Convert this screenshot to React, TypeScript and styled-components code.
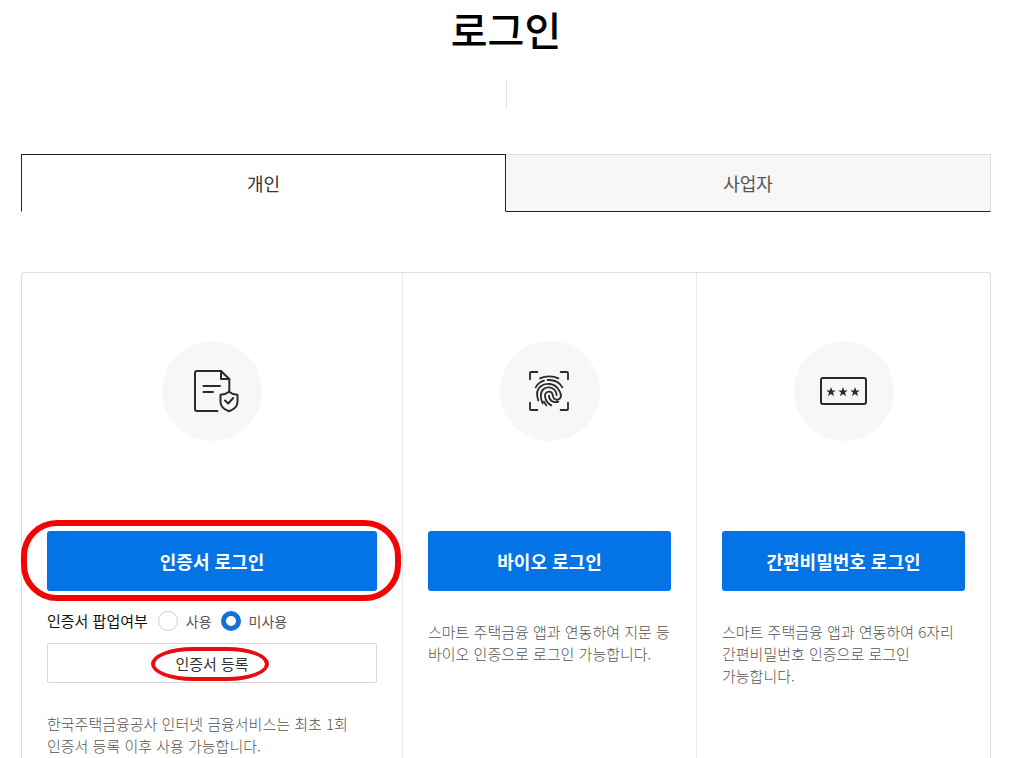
import React, { useState } from "react";
import styled, { createGlobalStyle } from "styled-components";

const GlobalStyle = createGlobalStyle`
  *, *::before, *::after { box-sizing: border-box; }
  body {
    margin: 0;
    background: #fff;
    color: #111;
    font-family: "Noto Sans CJK KR", "Noto Sans", sans-serif;
  }
  button { font-family: inherit; cursor: pointer; }
`;

const Page = styled.main`
  display: flex;
  flex-direction: column;
  min-height: 100vh;
  padding: 0 19px 0 21px;
`;

const Title = styled.h1`
  margin: 0;
  font-size: 40px;
  font-weight: 500;
  line-height: 58px;
  text-align: center;
  color: #000;
`;

const Divider = styled.div`
  width: 1px;
  height: 30px;
  margin: 22px auto 44px;
  background: #e2e2e2;
`;

const Tabs = styled.div`
  display: grid;
  grid-template-columns: 1fr 1fr;
  margin-bottom: 60px;
`;

const Tab = styled.button<{ $active: boolean }>`
  height: 58px;
  padding: 0;
  font-size: 18px;
  border: 1px solid ${(p) => (p.$active ? "#222" : "#ddd")};
  border-left-width: ${(p) => (p.$active ? 1 : 0)}px;
  border-bottom: 1px solid ${(p) => (p.$active ? "#fff" : "#222")};
  background: ${(p) => (p.$active ? "#fff" : "#f7f7f7")};
  color: ${(p) => (p.$active ? "#333" : "#555")};
`;

const Methods = styled.div`
  flex: 1;
  display: grid;
  grid-template-columns: 381fr 294fr 293fr;
  border: 1px solid #ddd;
  border-bottom: 0;
  border-radius: 3px 3px 0 0;
`;

const Method = styled.section`
  display: flex;
  flex-direction: column;
  padding: 68px 25px 0;
  &:not(:last-child) { border-right: 1px solid #e8e8e8; }
`;

const IconCircle = styled.div`
  align-self: center;
  width: 100px;
  height: 100px;
  margin-bottom: 90px;
  border-radius: 50%;
  background: #f7f7f7;
  svg { display: block; }
`;

const Marked = styled.div`
  position: relative;
  display: flex;
  flex-direction: column;
`;

const LoginButton = styled.button`
  height: 60px;
  padding: 0;
  border: 0;
  border-radius: 3px;
  background: #0473e6;
  color: #fff;
  font-size: 18px;
  font-weight: 700;
`;

const OutlineButton = styled.button`
  height: 40px;
  padding: 0;
  border: 1px solid #d8d8d8;
  border-radius: 2px;
  background: #fff;
  color: #333;
  font-size: 15px;
`;

const LoginMark = styled.span`
  position: absolute;
  inset: -11px -24px -10px -26px;
  border: 6px solid #f10505;
  border-radius: 36px;
  pointer-events: none;
`;

const RegisterMark = styled.span`
  position: absolute;
  top: 4px;
  left: 50%;
  width: 118px;
  height: 34px;
  transform: translateX(-50%);
  border: 4px solid #e60d12;
  border-radius: 42px / 17px;
  margin-left: -2px;
  pointer-events: none;
`;

const PopupChoice = styled.fieldset`
  display: flex;
  align-items: center;
  height: 20px;
  margin: 20px 0 12px;
  padding: 0;
  border: 0;
`;

const ChoiceTitle = styled.span`
  margin-right: 10px;
  font-size: 15px;
  line-height: 20px;
  color: #111;
`;

const Choice = styled.label`
  display: flex;
  align-items: center;
  gap: 8px;
  margin-right: 9px;
  font-size: 14px;
  line-height: 20px;
  color: #555;
`;

const Radio = styled.input`
  appearance: none;
  width: 20px;
  height: 20px;
  margin: 0;
  border: 1px solid #ccc;
  border-radius: 50%;
  background: #fff;
  &:checked { border: 5px solid #1272d4; }
`;

const Description = styled.p`
  margin: 30px 0 0;
  font-size: 15px;
  font-weight: 300;
  line-height: 22px;
  color: #555;
  word-break: keep-all;
`;

const strokeProps = {
  width: 100,
  height: 100,
  viewBox: "0 0 100 100",
  fill: "none",
  stroke: "#2b2b2b",
  strokeWidth: 2,
  strokeLinecap: "round" as const,
  strokeLinejoin: "round" as const,
  "aria-hidden": true,
};

const CertificateIcon = () => (
  <svg {...strokeProps}>
    <path d="M55.5 70H35a2 2 0 0 1-2-2V32a2 2 0 0 1 2-2h24l8.300 8V50" />
    <path d="M59 30v8h8.300" />
    <path d="M41.500 45H58M41.500 51H51" />
    <path d="M67 50.700c-2.400 2-5.300 2.900-8.500 3.100V61c0 4.500 3.800 7.500 8.500 9.300 4.700-1.800 8.500-4.800 8.500-9.300v-7.200c-3.200-.2-6.100-1.100-8.500-3.100z" />
    <path d="M63 59.500l3.200 3 5-5.500" />
  </svg>
);

const FingerprintIcon = () => (
  <svg {...strokeProps}>
    <g transform="translate(24 25) scale(.3333)" strokeWidth="5.500">
      <path d="M40 18H21a3 3 0 0 0-3 3v19M110 18h19a3 3 0 0 1 3 3v19M18 110v19a3 3 0 0 0 3 3h19M132 110v19a3 3 0 0 1-3 3h-19" />
      <path d="M48 37C63 29 88 29 103 37" />
      <path d="M35 64C41 53 50 47 60 44M71 42C90 41 107 49 115 64" />
      <path d="M43 103C36 84 40 69 50 61C66 48 92 53 102 68C109 78 113 91 108 97C101 104 89 102 87 91C86 82 82 77 75 77C67 77 62 83 63 91C65 105 72 113 82 118" />
      <path d="M67 118C64 114 62 111 60 107M56 112C48 96 48 78 59 69C69 61 85 63 92 72C96 77 98 82 98 87" />
      <path d="M75 89C75 103 87 112 103 107" />
    </g>
  </svg>
);

const star = "M0-5 1.300-1.600 4.800-1.600 2 .6 3 4.200 0 2.100-3 4.200-2 .6-4.800-1.600-1.300-1.600z";

const PasswordIcon = () => (
  <svg {...strokeProps}>
    <rect x="27" y="37" width="45" height="26" rx="2" />
    {[37, 49, 61].map((x) => (
      <path key={x} d={star} transform={`translate(${x} 51)`} fill="#2b2b2b" stroke="none" />
    ))}
  </svg>
);

export default function App() {
  const [tab, setTab] = useState(0);
  const [popup, setPopup] = useState("off");

  return (
    <>
      <GlobalStyle />
      <Page lang="ko">
        <Title>로그인</Title>
        <Divider />
        <Tabs role="tablist">
          {["개인", "사업자"].map((name, i) => (
            <Tab key={name} role="tab" aria-selected={tab === i} $active={tab === i} onClick={() => setTab(i)}>
              {name}
            </Tab>
          ))}
        </Tabs>
        <Methods>
          <Method>
            <IconCircle><CertificateIcon /></IconCircle>
            <Marked>
              <LoginButton>인증서 로그인</LoginButton>
              <LoginMark />
            </Marked>
            <PopupChoice aria-labelledby="popup-title">
              <ChoiceTitle id="popup-title">인증서 팝업여부</ChoiceTitle>
              <Choice>
                <Radio type="radio" name="popup" checked={popup === "on"} onChange={() => setPopup("on")} />
                사용
              </Choice>
              <Choice>
                <Radio type="radio" name="popup" checked={popup === "off"} onChange={() => setPopup("off")} />
                미사용
              </Choice>
            </PopupChoice>
            <Marked>
              <OutlineButton>인증서 등록</OutlineButton>
              <RegisterMark />
            </Marked>
            <Description>한국주택금융공사 인터넷 금융서비스는 최초 1회 인증서 등록 이후 사용 가능합니다.</Description>
          </Method>
          <Method>
            <IconCircle><FingerprintIcon /></IconCircle>
            <LoginButton>바이오 로그인</LoginButton>
            <Description>스마트 주택금융 앱과 연동하여 지문 등 바이오 인증으로 로그인 가능합니다.</Description>
          </Method>
          <Method>
            <IconCircle><PasswordIcon /></IconCircle>
            <LoginButton>간편비밀번호 로그인</LoginButton>
            <Description>스마트 주택금융 앱과 연동하여 6자리 간편비밀번호 인증으로 로그인 가능합니다.</Description>
          </Method>
        </Methods>
      </Page>
    </>
  );
}
